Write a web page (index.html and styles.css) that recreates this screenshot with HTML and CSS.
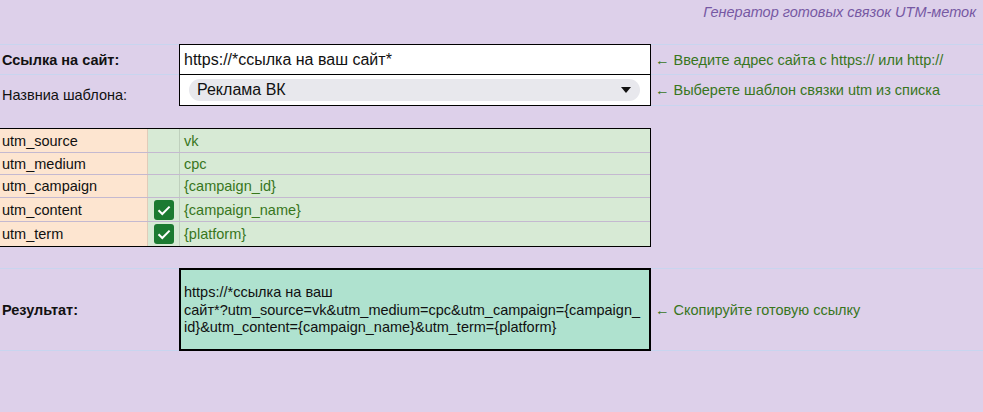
FILE: index.html
```html
<!DOCTYPE html>
<html lang="ru">
<head>
<meta charset="utf-8">
<title>Генератор UTM</title>
<link rel="stylesheet" href="styles.css">
</head>
<body>
<div class="title">Генератор готовых связок UTM-меток</div>

<div class="form">
  <div class="frow r1">
    <div class="lbl bold">Ссылка на сайт:</div>
    <div class="box input">https://*ссылка на ваш сайт*</div>
    <div class="hint">← Введите адрес сайта с https:// или http://</div>
  </div>
  <div class="frow r2">
    <div class="lbl low">Назвниа шаблона:</div>
    <div class="box sel">
      <div class="pill"><span>Реклама ВК</span><span class="caret"></span></div>
    </div>
    <div class="hint">← Выберете шаблон связки utm из списка</div>
  </div>
</div>

<div class="table">
  <div class="trow"><div class="ca">utm_source</div><div class="cb"></div><div class="cc">vk</div></div>
  <div class="trow"><div class="ca">utm_medium</div><div class="cb"></div><div class="cc">cpc</div></div>
  <div class="trow"><div class="ca">utm_campaign</div><div class="cb"></div><div class="cc">{campaign_id}</div></div>
  <div class="trow"><div class="ca">utm_content</div><div class="cb"><span class="check"><svg viewBox="0 0 20 20" width="20" height="20"><path d="M4.5 10.2 L8.3 14 L15.6 6.6" fill="none" stroke="#fff" stroke-width="2"/></svg></span></div><div class="cc">{campaign_name}</div></div>
  <div class="trow"><div class="ca">utm_term</div><div class="cb"><span class="check"><svg viewBox="0 0 20 20" width="20" height="20"><path d="M4.5 10.2 L8.3 14 L15.6 6.6" fill="none" stroke="#fff" stroke-width="2"/></svg></span></div><div class="cc">{platform}</div></div>
</div>

<div class="rrow">
  <div class="lbl bold">Результат:</div>
  <div class="result">https://*ссылка на ваш<br>сайт*?utm_source=vk&amp;utm_medium=cpc&amp;utm_campaign={campaign_<br>id}&amp;utm_content={campaign_name}&amp;utm_term={platform}</div>
  <div class="hint">← Скопируйте готовую ссылку</div>
</div>
</body>
</html>
```

FILE: styles.css
```css
* { box-sizing: border-box; }
body {
  margin: 0;
  background: #ddd0ea;
  font-family: "Liberation Sans", Arial, sans-serif;
  font-size: 14.5px;
  color: #111;
}
.title {
  height: 44px;
  padding: 3px 7px 0 0;
  text-align: right;
  font-style: italic;
  color: #7658a3;
  line-height: 18px;
}
.form { display: flex; flex-direction: column; }
.frow { display: flex; }
.r1 { height: 31px; }
.r2 { height: 31px; }
.lbl {
  width: 179px;
  padding-left: 2px;
  display: flex;
  align-items: center;
  color: #111;
}
.bold { font-weight: bold; }
.r1 .lbl { border-top: 1px solid #c8d5ef; border-bottom: 1px solid #c8d5ef; }
.r2 .lbl.low { align-items: flex-end; padding-bottom: 3px; }
.box {
  width: 472px;
  background: #fff;
  border: 1px solid #000;
  display: flex;
  align-items: center;
  font-size: 16px;
}
.input { padding-left: 4px; padding-top: 1px; }
.sel { border-top: none; padding: 0 10px 0 9px; }
.pill {
  flex: 1;
  height: 22px;
  border-radius: 11px;
  background: #e8e8ed;
  display: flex;
  align-items: center;
  justify-content: space-between;
  padding: 0 9px 0 8px;
}
.caret {
  width: 0;
  height: 0;
  border-left: 5px solid transparent;
  border-right: 5px solid transparent;
  border-top: 6px solid #111;
}
.hint {
  flex: 1;
  display: flex;
  align-items: center;
  padding-left: 4px;
  color: #38761d;
}
.r1 .hint { border-top: 1px solid #c8d5ef; border-bottom: 1px solid #c8d5ef; }
.r2 .hint { border-bottom: 1px solid #c8d5ef; padding-bottom: 1px; }

.table {
  width: 651px;
  margin-top: 22px;
  border-top: 1px solid #000;
  border-bottom: 1px solid #000;
  border-right: 1px solid #000;
}
.trow {
  display: flex;
  height: 23px;
  border-bottom: 1px solid rgba(0, 0, 0, 0.11);
}
.trow:nth-child(1), .trow:nth-child(4) { height: 24px; }
.trow:nth-child(2) { height: 22px; }
.trow:last-child { border-bottom: none; height: 24px; }
.ca {
  width: 148px;
  background: #fde5d0;
  border-right: 1px solid rgba(0, 0, 0, 0.11);
  padding-left: 2px;
  display: flex;
  align-items: center;
}
.cb {
  width: 32px;
  background: #d7ead5;
  border-right: 1px solid rgba(0, 0, 0, 0.11);
  display: flex;
  align-items: center;
  justify-content: center;
}
.cc {
  flex: 1;
  background: #d7ead5;
  padding-left: 4px;
  display: flex;
  align-items: center;
  color: #38761d;
}
.check {
  width: 20px;
  height: 20px;
  border-radius: 3px;
  background: #1b7a31;
  display: block;
}
.check svg { display: block; }

.rrow {
  display: flex;
  margin-top: 21px;
  height: 83px;
}
.rrow .lbl { border-top: 1px solid #c8d5ef; border-bottom: 1px solid #c8d5ef; }
.rrow .hint { border-top: 1px solid #c8d5ef; border-bottom: 1px solid #c8d5ef; }
.result {
  width: 472px;
  background: #afe2cf;
  border: 2px solid #000;
  padding: 2px 0 0 3px;
  display: flex;
  align-items: center;
  line-height: 17.5px;
  color: #111;
}
```
